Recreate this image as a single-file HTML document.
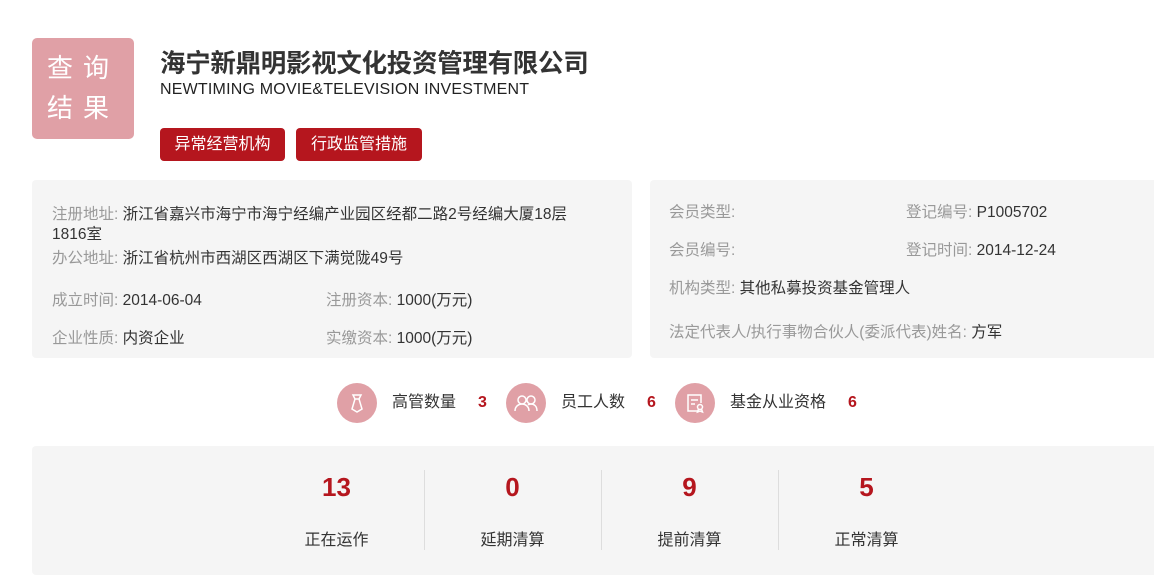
<!DOCTYPE html><html><head><meta charset="utf-8"><style>
body{margin:0;width:1154px;height:577px;background:#fff;font-family:"Liberation Sans","Noto Sans CJK SC",sans-serif;position:relative;overflow:hidden;color:#333}
.a{position:absolute;white-space:nowrap}
.logo{left:32px;top:38px;width:102px;height:101px;background:#e0a0a6;border-radius:5px;color:#fff;font-size:26px;line-height:40px;text-align:center;letter-spacing:10px;padding-top:10px;box-sizing:border-box}
.btn{top:128px;height:33px;background:#b5161e;color:#fff;border-radius:4px;font-size:16px;line-height:33px;text-align:center}
.panel{background:#f5f5f5;border-radius:4px}
.l{color:#999;font-size:15.5px;line-height:20px}.l b{font-weight:normal;color:#333}
.c{width:40px;height:40px;border-radius:50%;background:#e0a0a6}
.n{color:#b5161e;font-weight:bold;font-size:16px;line-height:20px}
.t{font-size:16px;line-height:20px}
.num{color:#b5161e;font-weight:bold;font-size:26px;width:177px;text-align:center}
.lab{font-size:16px;width:177px;text-align:center}
.d{width:1px;height:80px;background:#ddd;top:470px}
</style></head><body>
<div class="a logo">查询<br>结果</div>
<div class="a" style="left:160px;top:43px;font-size:25.5px;font-weight:bold;color:#333;letter-spacing:-0.3px">海宁新鼎明影视文化投资管理有限公司</div>
<div class="a" style="left:160px;top:80px;font-size:16px;line-height:20px;color:#222;letter-spacing:0.2px">NEWTIMING MOVIE&amp;TELEVISION INVESTMENT</div>
<div class="a btn" style="left:160px;width:125px">异常经营机构</div>
<div class="a btn" style="left:296px;width:126px">行政监管措施</div>
<div class="a panel" style="left:32px;top:180px;width:600px;height:178px"></div>
<div class="a panel" style="left:650px;top:180px;width:520px;height:178px"></div>
<div class="a l" style="left:52px;top:205px">注册地址: <b>浙江省嘉兴市海宁市海宁经编产业园区经都二路2号经编大厦18层</b></div>
<div class="a l" style="left:52px;top:225px"><b>1816室</b></div>
<div class="a l" style="left:52px;top:249px">办公地址: <b>浙江省杭州市西湖区西湖区下满觉陇49号</b></div>
<div class="a l" style="left:52px;top:291px">成立时间: <b>2014-06-04</b></div>
<div class="a l" style="left:326px;top:291px">注册资本: <b>1000(万元)</b></div>
<div class="a l" style="left:52px;top:329px">企业性质: <b>内资企业</b></div>
<div class="a l" style="left:326px;top:329px">实缴资本: <b>1000(万元)</b></div>
<div class="a l" style="left:669px;top:203px">会员类型:</div>
<div class="a l" style="left:906px;top:203px">登记编号: <b>P1005702</b></div>
<div class="a l" style="left:669px;top:241px">会员编号:</div>
<div class="a l" style="left:906px;top:241px">登记时间: <b>2014-12-24</b></div>
<div class="a l" style="left:669px;top:279px">机构类型: <b>其他私募投资基金管理人</b></div>
<div class="a l" style="left:669px;top:323px">法定代表人/执行事物合伙人(委派代表)姓名: <b>方军</b></div>
<div class="a c" style="left:337px;top:383px"><svg width="40" height="40" fill="none" stroke="#fff" stroke-width="1.5"><path d="M16 12h8l-2 4h-4zM18 16l-3 10 5 3 5-3-3-10"/></svg></div>
<div class="a t" style="left:392px;top:393px">高管数量</div><div class="a n" style="left:478px;top:393px">3</div>
<div class="a c" style="left:506px;top:383px"><svg width="40" height="40" fill="none" stroke="#fff" stroke-width="1.5"><circle cx="16" cy="17" r="4"/><circle cx="25" cy="17" r="4"/><path d="M9 28c0-5 4-7 7-7s7 2 7 7M22 22c1-1 2-1 3-1 3 0 6 2 6 7"/></svg></div>
<div class="a t" style="left:561px;top:393px">员工人数</div><div class="a n" style="left:647px;top:393px">6</div>
<div class="a c" style="left:675px;top:383px"><svg width="40" height="40" fill="none" stroke="#fff" stroke-width="1.5"><path d="M24 28h-11v-16h13v8M16 17h7M16 21h4"/><circle cx="25" cy="24" r="2.5"/><path d="M23.5 26l-1 3 2.5-1 2.5 1-1-3"/></svg></div>
<div class="a t" style="left:730px;top:393px">基金从业资格</div><div class="a n" style="left:848px;top:393px">6</div>
<div class="a panel" style="left:32px;top:446px;width:1140px;height:129px"></div>
<div class="a num" style="left:248px;top:472px">13</div><div class="a lab" style="left:248px;top:526px">正在运作</div>
<div class="a num" style="left:424px;top:472px">0</div><div class="a lab" style="left:424px;top:526px">延期清算</div>
<div class="a num" style="left:601px;top:472px">9</div><div class="a lab" style="left:601px;top:526px">提前清算</div>
<div class="a num" style="left:778px;top:472px">5</div><div class="a lab" style="left:778px;top:526px">正常清算</div>
<div class="a d" style="left:424px"></div><div class="a d" style="left:601px"></div><div class="a d" style="left:778px"></div>
</body></html>
